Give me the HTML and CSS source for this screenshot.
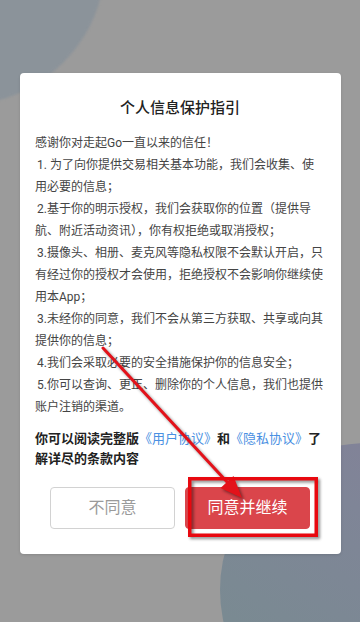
FILE: index.html
```html
<!DOCTYPE html>
<html lang="zh-CN">
<head>
<meta charset="utf-8">
<meta name="viewport" content="width=device-width, initial-scale=1">
<title>个人信息保护指引</title>
<link rel="stylesheet" href="styles.css">
</head>
<body>
<div class="backdrop" aria-hidden="true">
  <div class="blob blob-tl"></div>
  <div class="blob blob-br"></div>
</div>
<main class="page">
  <section class="dialog">
    <h1 class="dialog-title">个人信息保护指引</h1>
    <div class="dialog-body">
      <p class="intro">感谢你对走起Go一直以来的信任！</p>
      <p class="item">1. 为了向你提供交易相关基本功能，我们会收集、使用必要的信息；</p>
      <p class="item">2.基于你的明示授权，我们会获取你的位置（提供导航、附近活动资讯），你有权拒绝或取消授权；</p>
      <p class="item">3.摄像头、相册、麦克风等隐私权限不会默认开启，只有经过你的授权才会使用，拒绝授权不会影响你继续使用本App；</p>
      <p class="item">3.未经你的同意，我们不会从第三方获取、共享或向其提供你的信息；</p>
      <p class="item">4.我们会采取必要的安全措施保护你的信息安全；</p>
      <p class="item">5.你可以查询、更正、删除你的个人信息，我们也提供账户注销的渠道。</p>
    </div>
    <p class="notice"><span>你可以阅读完整版</span><a class="link" href="#">《用户协议》</a><span>和</span><a class="link" href="#">《隐私协议》</a><span>了</span><span>解详尽的条款内容</span></p>
    <div class="actions">
      <button class="btn btn-decline" type="button">不同意</button>
      <button class="btn btn-accept" type="button">同意并继续</button>
    </div>
  </section>
</main>
<svg class="annotation" width="360" height="622" viewBox="0 0 360 622" aria-hidden="true">
  <line x1="103" y1="348" x2="228" y2="483" class="arrow-line"/>
  <polygon points="242,498 233.5,476 220.5,488" class="arrow-head"/>
  <rect x="189.75" y="478.75" width="126.5" height="56.5" class="mark-box"/>
</svg>
</body>
</html>
```
FILE: styles.css
```css
html, body {
  margin: 0;
  padding: 0;
}

body {
  position: relative;
  width: 360px;
  height: 622px;
  overflow: hidden;
  background: #9b9b9b;
  font-family: Roboto, "Noto Sans CJK SC", sans-serif;
}

.backdrop {
  position: absolute;
  inset: 0;
  z-index: 0;
  overflow: hidden;
}

.blob {
  position: absolute;
}

.blob-tl {
  left: -116px;
  top: -89px;
  width: 232px;
  height: 178px;
  border-radius: 50%;
  background: #8b939a;
  transform: rotate(-45deg);
  filter: blur(1px);
}

.blob-br {
  left: 220px;
  top: 443px;
  width: 294px;
  height: 294px;
  border-radius: 50%;
  background: linear-gradient(215deg, #857f99 0%, #7f8597 35%, #7a8a92 75%, #7b8d8f 100%);
}

.page {
  position: relative;
  z-index: 1;
  display: flex;
  justify-content: center;
  padding-top: 73px;
}

.dialog {
  width: 321px;
  box-sizing: border-box;
  padding: 24px 15.5px 25px;
  background: #ffffff;
  border-radius: 4px;
  box-shadow: 0 1px 3px rgba(0, 0, 0, 0.12);
}

.dialog-title {
  margin: 0 0 13px;
  font-size: 15px;
  line-height: 22px;
  font-weight: 500;
  color: #222222;
  text-align: center;
}

.dialog-body p {
  margin: 0;
  font-size: 12px;
  line-height: 22px;
  color: #444444;
}

.dialog-body .item {
  text-indent: 2px;
}

.notice {
  margin: 11px 0 0;
  font-size: 13px;
  line-height: 20px;
  font-weight: 700;
  color: #222222;
}

.link {
  color: #4a90e2;
  font-weight: 400;
  text-decoration: none;
}

.actions {
  display: flex;
  justify-content: center;
  gap: 10px;
  margin-top: 18px;
}

.btn {
  width: 125px;
  height: 42px;
  box-sizing: border-box;
  border-radius: 4px;
  font-family: Roboto, "Noto Sans CJK SC", sans-serif;
  font-size: 16px;
  line-height: 1;
  padding: 0;
}

.btn-decline {
  background: #ffffff;
  border: 1px solid #d2d2d2;
  color: #9a9a9a;
}

.btn-accept {
  background: #da454b;
  border: 1px solid #da454b;
  color: #ffffff;
}

.annotation {
  position: absolute;
  left: 0;
  top: 0;
  z-index: 2;
  pointer-events: none;
  filter: drop-shadow(2px 2px 1.5px rgba(0, 0, 0, 0.45));
}

.arrow-line {
  stroke: #e3121a;
  stroke-width: 3;
  stroke-linecap: round;
}

.arrow-head {
  fill: #e3121a;
}

.mark-box {
  fill: none;
  stroke: #e8080f;
  stroke-width: 3.5;
}
```
